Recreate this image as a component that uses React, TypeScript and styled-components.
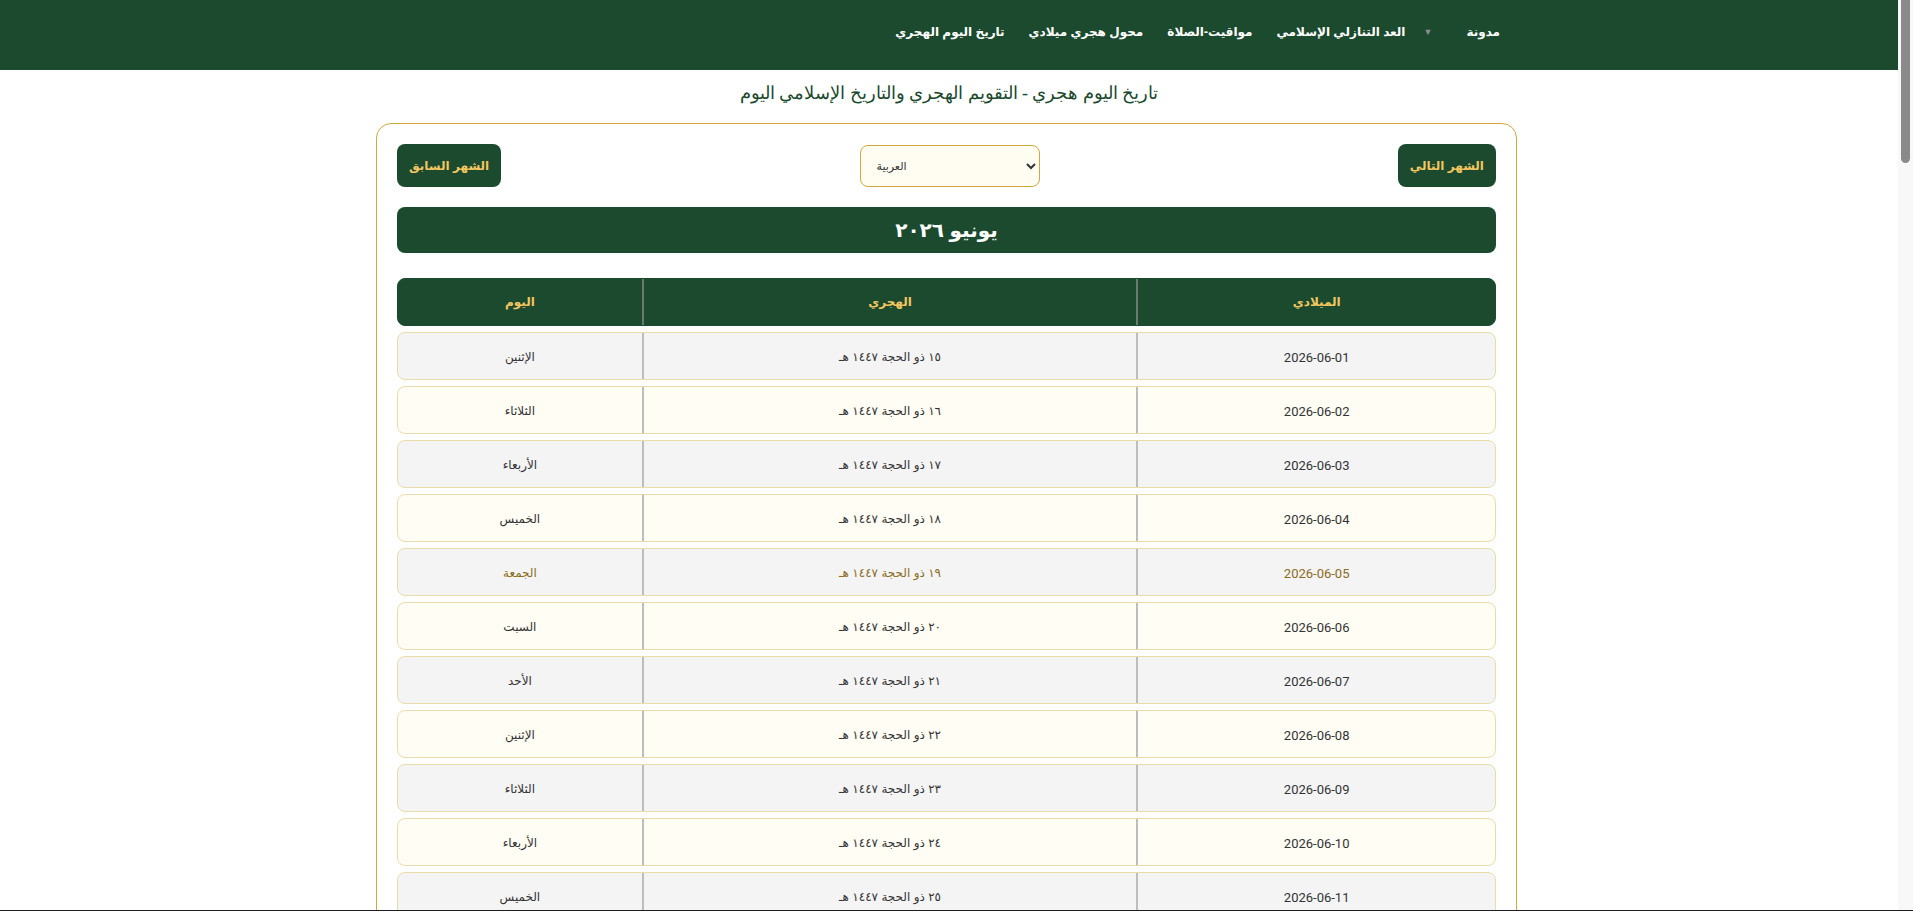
import React from "react";
import styled, { createGlobalStyle } from "styled-components";

const GREEN = "#1b4a2e";
const GOLD = "#d2a83e";
const GOLD_TEXT = "#f2c660";

const GlobalStyle = createGlobalStyle`
  html, body { margin: 0; padding: 0; background: #ffffff; }
  body {
    direction: rtl;
    font-family: "Liberation Sans", "DejaVu Sans", Arial, sans-serif;
    color: #333;
  }
  *, *::before, *::after { box-sizing: border-box; }
  ::-webkit-scrollbar { width: 15px; }
  ::-webkit-scrollbar-track { background: #f6f6f6; }
  ::-webkit-scrollbar-thumb {
    background: #8a8a8a;
    border-radius: 8px;
    border: 3px solid #f6f6f6;
  }
`;

const Page = styled.div`
  margin-right: 15px;
  padding-bottom: 40px;
`;

const ScrollTrack = styled.div`
  position: fixed;
  top: 0;
  right: 0;
  width: 15px;
  height: 100vh;
  background: #f8f8f8;
  display: flex;
  justify-content: center;
`;

const ScrollThumb = styled.div`
  width: 9px;
  height: 163px;
  border-radius: 0 0 5px 5px;
  background: #8a8a8a;
`;

const Header = styled.header`
  background: ${GREEN};
  height: 70px;
`;

const HeaderInner = styled.div`
  max-width: 1140px;
  margin: 0 auto;
  padding: 24px 19px 0;
`;

const NavList = styled.ul`
  list-style: none;
  margin: 0;
  padding: 0;
  display: flex;
  align-items: center;
  gap: 24px;
`;

const NavItem = styled.li<{ $tight?: boolean }>`
  color: #ffffff;
  font-weight: bold;
  font-size: 12px;
  line-height: 16px;
  white-space: nowrap;
  display: flex;
  align-items: center;
  margin-inline-end: ${(p) => (p.$tight ? "-6px" : "0")};
`;

const Caret = styled.span`
  color: #8d8d8d;
  font-size: 9px;
  margin-inline-start: 34px;
`;

const Title = styled.h1`
  margin: 9px 0 16px;
  text-align: center;
  font-family: "Liberation Serif", "DejaVu Serif", serif;
  font-weight: normal;
  font-size: 18px;
  line-height: 28px;
  color: ${GREEN};
`;

const Card = styled.main`
  width: 1141px;
  margin: 0 auto 0 calc(50% - 573px);
  border: 1px solid ${GOLD};
  border-radius: 15px;
  padding: 20px;
  background: #ffffff;
`;

const Controls = styled.div`
  display: flex;
  align-items: center;
  justify-content: space-between;
`;

const NavButton = styled.button`
  height: 43px;
  padding: 0 12px;
  border: none;
  border-radius: 8px;
  background: ${GREEN};
  color: ${GOLD_TEXT};
  font-family: "Liberation Sans", "DejaVu Sans", sans-serif;
  font-weight: bold;
  font-size: 12px;
  cursor: pointer;
`;

const LangSelect = styled.select`
  direction: ltr;
  width: 180px;
  height: 42px;
  padding: 0 12px;
  border: 1px solid ${GOLD};
  border-radius: 8px;
  background: #fffcf2;
  color: #333;
  font-family: "Liberation Sans", "DejaVu Sans", sans-serif;
  font-size: 11px;
`;

const MonthBanner = styled.div`
  margin-top: 20px;
  height: 46px;
  border-radius: 8px;
  background: ${GREEN};
  color: #ffffff;
  font-weight: bold;
  font-size: 20px;
  display: flex;
  align-items: center;
  justify-content: center;
`;

const Table = styled.div`
  margin-top: 25px;
  display: flex;
  flex-direction: column;
  gap: 6px;
`;

const Row = styled.div<{ $head?: boolean; $alt?: boolean; $friday?: boolean }>`
  display: grid;
  grid-template-columns: 359fr 495fr 244fr;
  height: 48px;
  border-radius: 8px;
  border: 1px solid ${(p) => (p.$head ? GREEN : "#eadca8")};
  background: ${(p) => (p.$head ? GREEN : p.$alt ? "#fffdf4" : "#f4f4f5")};
  color: ${(p) => (p.$head ? GOLD_TEXT : p.$friday ? "#8c6c1a" : "#333")};
  font-weight: ${(p) => (p.$head ? "bold" : "normal")};
  font-size: 12px;
`;

const Cell = styled.div<{ $head?: boolean; $date?: boolean; $last?: boolean }>`
  display: flex;
  align-items: center;
  justify-content: center;
  border-left: ${(p) => (p.$last ? "none" : `2px solid ${p.$head ? "#6b7a6f" : "#bdbdbd"}`)};
  font-family: ${(p) =>
    p.$date ? "Roboto, 'Liberation Sans', sans-serif" : "'Liberation Sans', 'DejaVu Sans', sans-serif"};
  font-size: ${(p) => (p.$date ? "13px" : "12px")};
  padding-top: ${(p) => (p.$head ? "0" : "2px")};
`;

const BottomEdge = styled.div`
  position: fixed;
  left: 0;
  right: 0;
  bottom: 0;
  height: 1px;
  background: #1e1e1e;
`;

const toArabicDigits = (n: number | string) =>
  String(n).replace(/\d/g, (d) => "٠١٢٣٤٥٦٧٨٩"[Number(d)]);

const WEEKDAYS = ["الإثنين", "الثلاثاء", "الأربعاء", "الخميس", "الجمعة", "السبت", "الأحد"];

const rows = Array.from({ length: 30 }, (_, i) => {
  const day = i + 1;
  const date = `2026-06-${String(day).padStart(2, "0")}`;
  const hijri =
    day <= 15
      ? `${toArabicDigits(14 + day)} ذو الحجة ${toArabicDigits(1447)} هـ`
      : `${toArabicDigits(day - 15)} محرم ${toArabicDigits(1448)} هـ`;
  const weekday = WEEKDAYS[i % 7];
  return { date, hijri, weekday, friday: weekday === "الجمعة" };
});

export default function App() {
  return (
    <>
      <GlobalStyle />
      <Page>
        <Header>
          <HeaderInner>
            <NavList>
              <NavItem $tight>
                مدونة
                <Caret>▼</Caret>
              </NavItem>
              <NavItem>العد التنازلي الإسلامي</NavItem>
              <NavItem>مواقيت-الصلاة</NavItem>
              <NavItem>محول هجري ميلادي</NavItem>
              <NavItem>تاريخ اليوم الهجري</NavItem>
            </NavList>
          </HeaderInner>
        </Header>

        <Title>تاريخ اليوم هجري - التقويم الهجري والتاريخ الإسلامي اليوم</Title>

        <Card>
          <Controls>
            <NavButton>الشهر التالي</NavButton>
            <LangSelect defaultValue="ar">
              <option value="ar">العربية</option>
              <option value="en">English</option>
            </LangSelect>
            <NavButton>الشهر السابق</NavButton>
          </Controls>

          <MonthBanner>يونيو {toArabicDigits(2026)}</MonthBanner>

          <Table>
            <Row $head>
              <Cell $head>الميلادي</Cell>
              <Cell $head>الهجري</Cell>
              <Cell $head $last>
                اليوم
              </Cell>
            </Row>
            {rows.map((r, i) => (
              <Row key={r.date} $alt={i % 2 === 1} $friday={r.friday}>
                <Cell $date>{r.date}</Cell>
                <Cell>{r.hijri}</Cell>
                <Cell $last>{r.weekday}</Cell>
              </Row>
            ))}
          </Table>
        </Card>
      </Page>
      <ScrollTrack>
        <ScrollThumb />
      </ScrollTrack>
      <BottomEdge />
    </>
  );
}
